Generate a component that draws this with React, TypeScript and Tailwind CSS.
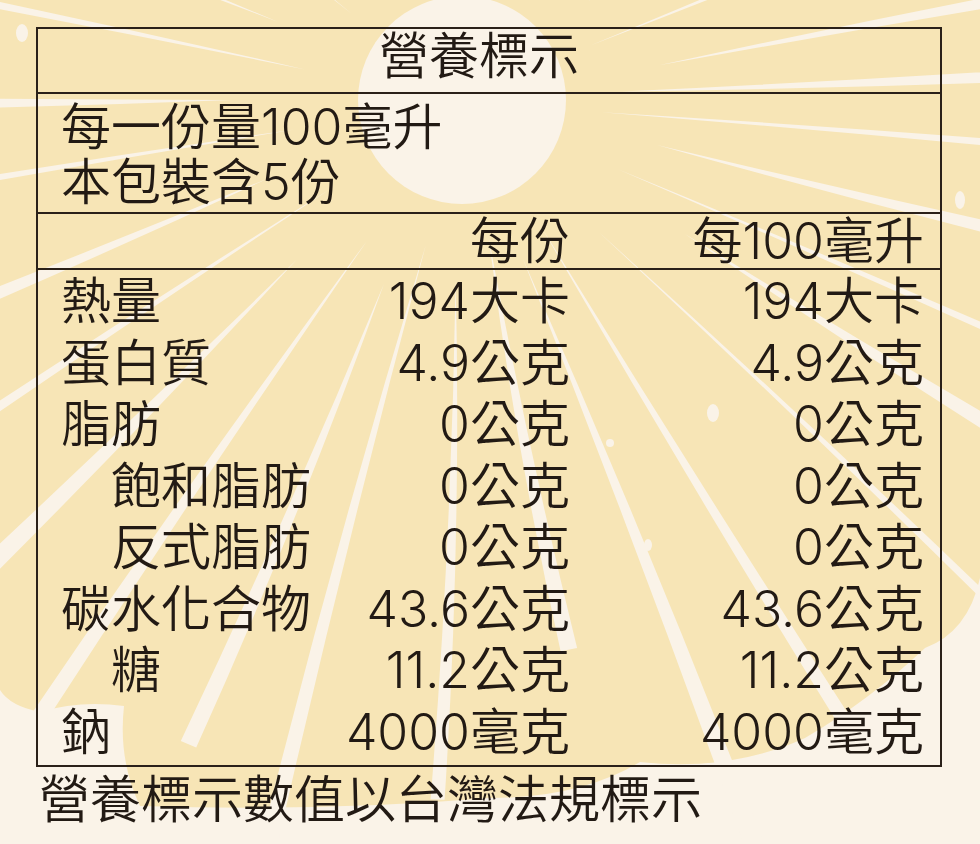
import React from "react";

const CX = 462;
const CY = 100;
const CREAM = "#faf3e8";
const YELLOW = "#f7e5b6";

// [angleDeg, startRadius, endRadius, width, bend]
const RAYS: [number, number, number, number, number][] = [
  [-3, 160, 1100, 16, 10],
  [5, 140, 1100, 10, -8],
  [13, 200, 1100, 18, 12],
  [24, 170, 1100, 9, -10],
  [31, 260, 1100, 20, 14],
  [44, 190, 1100, 8, -12],
  [58, 150, 1100, 14, 10],
  [69, 170, 1100, 18, -14],
  [79, 140, 560, 12, 8],
  [92, 180, 700, 10, -10],
  [104, 150, 1100, 16, 16],
  [113, 200, 700, 12, -8],
  [124, 170, 1100, 16, 12],
  [136, 230, 1100, 22, -14],
  [146, 160, 1100, 12, 10],
  [158, 210, 1100, 20, -12],
  [170, 170, 1100, 10, 10],
  [180, 230, 1100, 18, -8],
  [191, 160, 1100, 12, 10],
  [203, 200, 1100, 16, -10],
  [218, 140, 1100, 12, 8],
  [236, 130, 1100, 16, -6],
  [302, 130, 1100, 12, 6],
  [322, 160, 1100, 18, -8],
  [337, 140, 1100, 12, 10],
  [350, 200, 1100, 16, -10],
];

function rayPath(a: number, r0: number, r1: number, w: number, bend: number) {
  const rad = (a * Math.PI) / 180;
  const dx = Math.cos(rad);
  const dy = Math.sin(rad);
  const nx = -dy;
  const ny = dx;
  const pt = (r: number, off: number) => [CX + dx * r + nx * off, CY + dy * r + ny * off];
  const rm = (r0 + r1) / 2;
  const s = pt(r0, 0);
  const m1 = pt(rm, bend + w * 0.5);
  const e1 = pt(r1, w * 0.7);
  const e2 = pt(r1, -w * 0.7);
  const m2 = pt(rm, bend - w * 0.5);
  const f = (p: number[]) => `${p[0].toFixed(1)} ${p[1].toFixed(1)}`;
  return `M${f(s)} Q${f(m1)} ${f(e1)} L${f(e2)} Q${f(m2)} ${f(s)} Z`;
}

function Background() {
  return (
    <svg className="absolute inset-0" width={980} height={844} viewBox="0 0 980 844">
      <rect width="980" height="844" fill={CREAM} />
      <path
        d="M0 0 H980 V578 Q968 632 925 648 Q870 700 805 738 Q730 772 640 762 Q580 798 490 798 Q320 812 140 806 Q118 760 124 706 Q80 700 40 712 Q10 706 0 690 Z"
        fill={YELLOW}
      />
      {RAYS.map(([a, r0, r1, w, b], i) => (
        <path key={i} d={rayPath(a, r0, r1, w, b)} fill={CREAM} />
      ))}
      <circle cx={CX} cy={CY} r={104} fill={CREAM} />
      <ellipse cx={22} cy={33} rx={6} ry={9} fill={CREAM} />
      <ellipse cx={713} cy={413} rx={6} ry={9} fill={CREAM} />
      <ellipse cx={610} cy={443} rx={4} ry={4} fill={CREAM} />
      <ellipse cx={648} cy={545} rx={4} ry={6} fill={CREAM} />
      <ellipse cx={960} cy={200} rx={5} ry={9} fill={CREAM} />
    </svg>
  );
}

const LINE = "border-[#2a2019]";

type Row = { label: string; indent?: boolean; a: string; b: string };

const ROWS: Row[] = [
  { label: "熱量", a: "194大卡", b: "194大卡" },
  { label: "蛋白質", a: "4.9公克", b: "4.9公克" },
  { label: "脂肪", a: "0公克", b: "0公克" },
  { label: "飽和脂肪", indent: true, a: "0公克", b: "0公克" },
  { label: "反式脂肪", indent: true, a: "0公克", b: "0公克" },
  { label: "碳水化合物", a: "43.6公克", b: "43.6公克" },
  { label: "糖", indent: true, a: "11.2公克", b: "11.2公克" },
  { label: "鈉", a: "4000毫克", b: "4000毫克" },
];

export default function App() {
  return (
    <div className="relative w-[980px] h-[844px] overflow-hidden text-[#221a14] font-['Inter','Noto_Sans_CJK_TC','Noto_Sans_CJK_SC',sans-serif] text-[50px] font-[350]">
      <Background />
      <div className="relative pt-[27px] pl-[36px]">
        <div className={`w-[906px] border-2 ${LINE}`}>
          <div className={`h-[65px] border-b-2 ${LINE} flex justify-center pr-[20px] pt-[2px] leading-[50px]`}>
            營養標示
          </div>
          <div className={`h-[120px] border-b-2 ${LINE} pl-[23px] pt-[6px] leading-[55px]`}>
            <div>每一份量100毫升</div>
            <div>本包裝含5份</div>
          </div>
          <div className={`h-[56px] border-b-2 ${LINE} grid grid-cols-[292px_240px_354px] pr-[16px] leading-[52px] pt-[1px]`}>
            <div />
            <div className="text-right">每份</div>
            <div className="text-right">每100毫升</div>
          </div>
          <div className="h-[495px] grid grid-cols-[292px_240px_354px] grid-rows-[repeat(8,61.5px)] pr-[16px] pt-[1px] leading-[61.5px]">
            {ROWS.map((r) => (
              <React.Fragment key={r.label}>
                <div className={r.indent ? "pl-[73px] whitespace-nowrap" : "pl-[23px] whitespace-nowrap"}>{r.label}</div>
                <div className="text-right whitespace-nowrap">{r.a}</div>
                <div className="text-right whitespace-nowrap">{r.b}</div>
              </React.Fragment>
            ))}
          </div>
        </div>
        <div className="pl-[3px] pt-[8px] text-[51px] leading-[50px] whitespace-nowrap">營養標示數值以台灣法規標示</div>
      </div>
    </div>
  );
}
